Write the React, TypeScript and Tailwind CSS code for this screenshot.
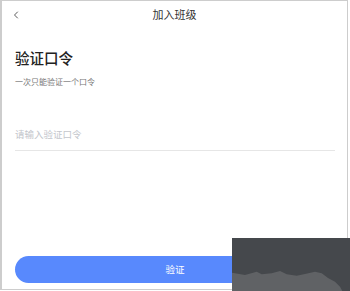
import { ChevronLeft } from "lucide-react";

const font = { fontFamily: '"Noto Sans CJK SC", "Noto Sans", sans-serif' };

const ScreenShade = () => (
  <svg
    className="absolute left-[232px] top-[238px] w-[118px] h-[53px]"
    viewBox="0 0 118 53"
  >
    <rect width="118" height="53" fill="#45484c" />
    <polygon
      fill="#606265"
      points="0,34.7 13,37 24.7,33.7 29.7,36.3 39.7,35.3 48,33 54.7,36.3 64.7,37.7 73,36 83,33.7 89.7,35.3 96,40 103,43.7 108,48.7 110.3,53 0,53"
    />
  </svg>
);

export default function App() {
  return (
    <div className="relative w-[350px] h-[291px] bg-white overflow-hidden" style={font}>
      <div className="w-[348px] h-[290px] border-t border-l-2 border-r border-b border-[#cdcdcd] flex flex-col">
        <header className="relative h-[27px] flex items-center justify-center">
          <ChevronLeft
            className="absolute left-[8px] top-[8px] w-[12px] h-[12px] text-[#444]"
            strokeWidth={1.75}
          />
          <h1 className="text-[11px] leading-none text-[#333]">加入班级</h1>
        </header>

        <div className="flex-1 flex flex-col px-[13px] pb-[6px]">
          <h2 className="mt-[20px] text-[14.5px] leading-[20px] font-medium text-[#222]">
            验证口令
          </h2>
          <p className="mt-[8px] text-[8px] leading-[11px] text-[#777]">一次只能验证一个口令</p>

          <div className="mt-[31px] h-[33px] mr-[-1px] flex items-center border-b border-[#e6e6e6]">
            <span className="text-[9.5px] text-[#c3c6cc]">请输入验证口令</span>
          </div>

          <button className="mt-auto h-[27px] w-[320px] rounded-full bg-[#5889fd] text-white text-[9.5px] flex items-center justify-center">
            验证
          </button>
        </div>
      </div>

      <ScreenShade />
    </div>
  );
}
